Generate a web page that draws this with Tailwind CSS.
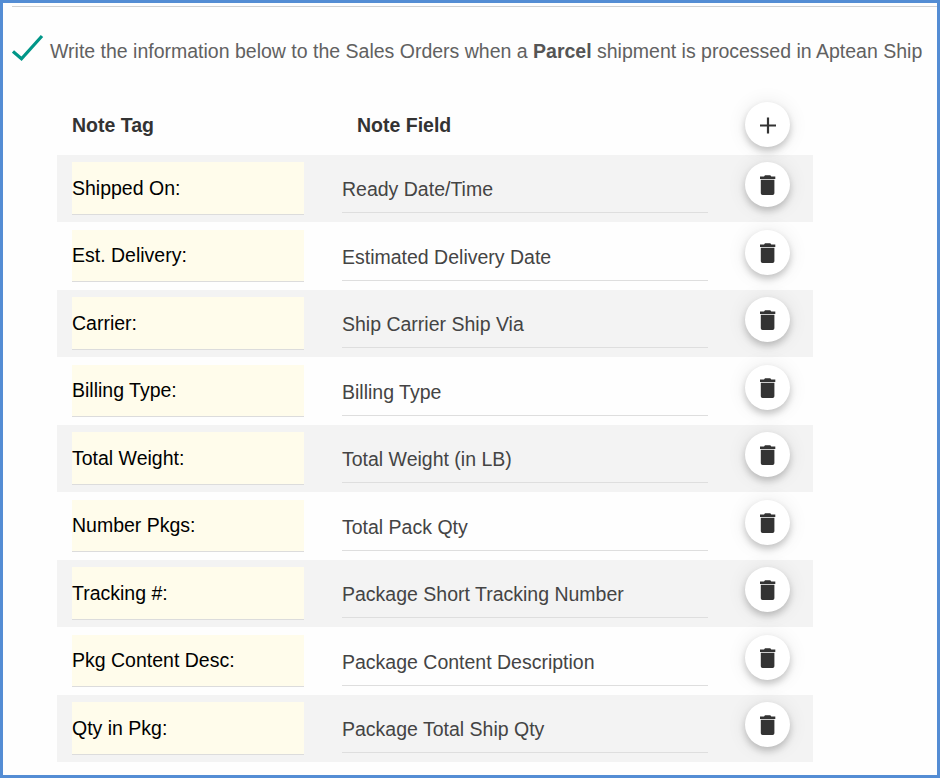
<!DOCTYPE html>
<html lang="en">
<head>
<meta charset="utf-8">
<title>Sales Order Notes</title>
<script src="https://cdn.jsdelivr.net/npm/@tailwindcss/browser@4"></script>
</head>
<body class="bg-white">
<main class="w-[940px] h-[778px] overflow-hidden border-3 border-[#548dd4] bg-[#fefefe] pt-[3px] font-['Liberation_Sans',Arial,sans-serif] text-[19.5px] leading-6">
  <div class="ml-[9px] h-px bg-[#d2d2d2]"></div>
  <header class="flex h-[88px] items-start pl-[9px]">
    <svg class="mt-[27px] h-[28px] w-[32px] shrink-0" viewBox="0 0 32 28" fill="none" stroke="#009688" stroke-width="3.2"><path d="M1 17.4 9.5 24.8 30 2"/></svg>
    <p class="mt-[32px] ml-[6px] whitespace-nowrap text-[#616161]">Write the information below to the Sales Orders when a <b class="text-[#555]">Parcel</b> shipment is processed in Aptean Ship</p>
  </header>
  <section class="ml-[54px] w-[756px] text-[#333]">
    <div class="grid h-[60px] grid-cols-[300px_388px_45px] pl-[15px]">
      <h2 class="pt-[18px] font-bold">Note Tag</h2>
      <h2 class="pt-[18px] -ml-[15px] font-bold">Note Field</h2>
      <button class="-ml-[15px] mt-[7px] flex size-[45px] justify-center rounded-full bg-white pt-[15px] shadow-[0_4px_7px_rgba(0,0,0,0.2),0_1px_20px_rgba(0,0,0,0.09)]" aria-label="Add">
        <svg class="size-[17px]" viewBox="0 0 17 17" stroke="#333" stroke-width="2.2"><path d="M1 8.5h16M9 .5v16"/></svg>
      </button>
    </div>
    <div id="rows"></div>
  </section>
</main>
<script>
const rows = [
  ["Shipped On:", "Ready Date/Time"],
  ["Est. Delivery:", "Estimated Delivery Date"],
  ["Carrier:", "Ship Carrier Ship Via"],
  ["Billing Type:", "Billing Type"],
  ["Total Weight:", "Total Weight (in LB)"],
  ["Number Pkgs:", "Total Pack Qty"],
  ["Tracking #:", "Package Short Tracking Number"],
  ["Pkg Content Desc:", "Package Content Description"],
  ["Qty in Pkg:", "Package Total Ship Qty"]
];
document.getElementById("rows").innerHTML = rows.map(([tag, field]) => `
  <div class="group flex h-[67px] items-start pl-[15px] pt-[7px] odd:bg-[#f3f3f3] even:h-[68px] even:pt-[8px]">
    <div class="h-[53px] w-[232px] border-b border-[#dcdcdc] bg-[#fffceb] pt-[14px] text-black group-even:h-[52px] group-even:pt-[13px]">${tag}</div>
    <div class="ml-[38px] h-[51px] w-[366px] border-b border-[#dedede] pt-[15px] text-[#444]">${field}</div>
    <button class="ml-[37px] flex size-[45px] justify-center rounded-full bg-white pt-[13px] shadow-[0_4px_7px_rgba(0,0,0,0.2),0_1px_20px_rgba(0,0,0,0.09)]" aria-label="Delete">
      <svg class="h-[20px] w-[15px] overflow-visible" viewBox="0 0 15 20" fill="#333"><path d="M0 1.4h4L5 .3h5.3l1 1.1h4v2.5H0zM.8 4.7h13.6v13.5q0 1.8-1.8 1.8h-10Q.8 20 .8 18.2z"/></svg>
    </button>
  </div>`).join("");
</script>
</body>
</html>
